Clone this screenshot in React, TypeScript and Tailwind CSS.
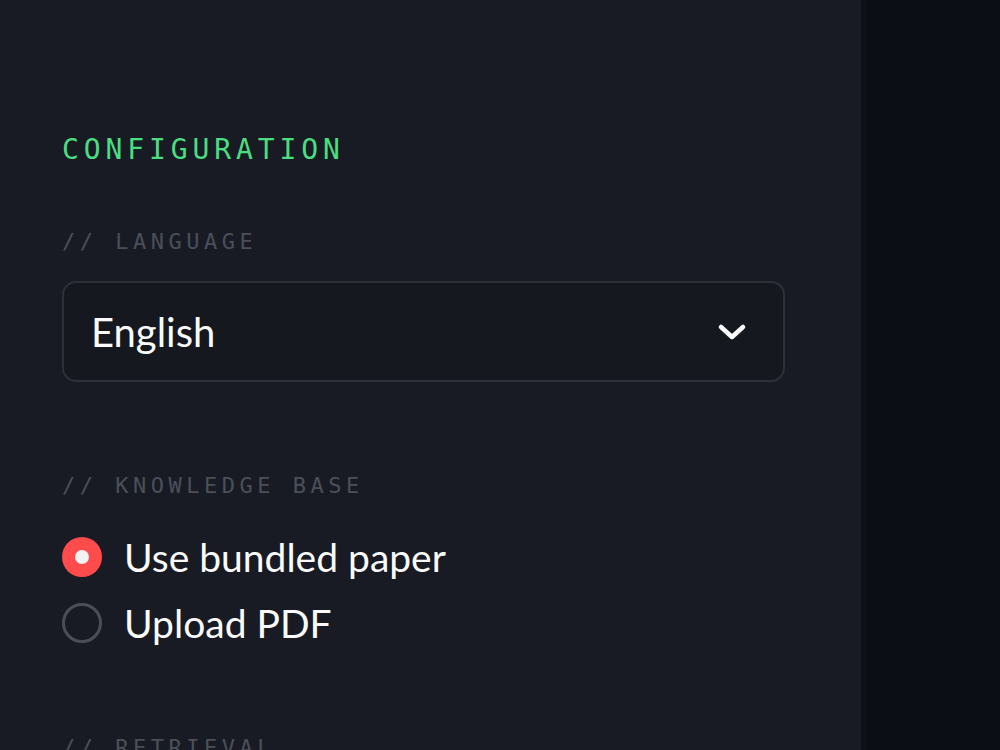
import React, { useState } from 'react';

const mono = "font-['DejaVu_Sans_Mono','Liberation_Mono',monospace]";
const sans = "font-['Lato','Noto_Sans',sans-serif]";

const SectionLabel: React.FC<{ text: string; className?: string }> = ({ text, className = '' }) => (
  <div className={`${mono} text-[22px] leading-[26px] tracking-[4.5px] text-[#4a4f59] ${className}`}>{text}</div>
);

const Radio: React.FC<{ label: string; checked: boolean; onClick: () => void }> = ({ label, checked, onClick }) => (
  <button onClick={onClick} className="flex items-center gap-[22px] h-[66px] text-left">
    {checked ? (
      <span className="w-[40px] h-[40px] rounded-full bg-[#ff4b4b] flex items-center justify-center">
        <span className="w-[14px] h-[14px] rounded-full bg-[#f2f2f2]" />
      </span>
    ) : (
      <span className="w-[40px] h-[40px] rounded-full border-[3px] border-[#4a4f57]" />
    )}
    <span className={`${sans} text-[39px] text-[#fafafa]`}>{label}</span>
  </button>
);

const App: React.FC = () => {
  const [source, setSource] = useState('bundled');

  return (
    <div className="flex w-[1000px] h-[750px] overflow-hidden bg-[#0b0e15]">
      <aside className="w-[866px] shrink-0 h-full bg-[#181b23] border-r-[5px] border-[#0e1119] pl-[62px] pr-[76px] pt-[131px]">
        <h2 className={`${mono} text-[28px] leading-[38px] tracking-[4.9px] text-[#4ade80]`}>CONFIGURATION</h2>

        <SectionLabel text="// LANGUAGE" className="mt-[60px]" />
        <button className="mt-[26px] w-full h-[101px] rounded-[14px] border-2 border-[#2c3039] bg-[#15181f] flex items-center justify-between pl-[27px] pr-[36px]">
          <span className={`${sans} text-[40px] text-[#fafafa]`}>English</span>
          <svg width="30" height="20" viewBox="0 0 30 20" fill="none">
            <path d="M4 5l11 10 11-10" stroke="#fafafa" strokeWidth="4.5" strokeLinecap="round" strokeLinejoin="round" />
          </svg>
        </button>

        <SectionLabel text="// KNOWLEDGE BASE" className="mt-[91px]" />
        <div className="mt-[25px] flex flex-col">
          <Radio label="Use bundled paper" checked={source === 'bundled'} onClick={() => setSource('bundled')} />
          <Radio label="Upload PDF" checked={source === 'upload'} onClick={() => setSource('upload')} />
        </div>

        <SectionLabel text="// RETRIEVAL" className="mt-[79px]" />
      </aside>
      <main className="flex-1 h-full" />
    </div>
  );
};

export default App;
